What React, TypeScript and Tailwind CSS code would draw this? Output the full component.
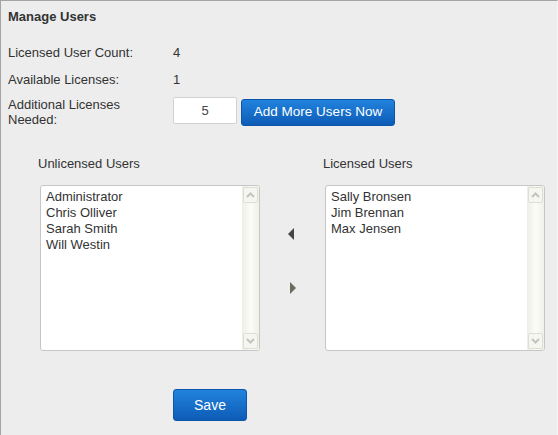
import React from 'react';

const unlicensed = ['Administrator', 'Chris Olliver', 'Sarah Smith', 'Will Westin'];
const licensed = ['Sally Bronsen', 'Jim Brennan', 'Max Jensen'];

const Chevron = ({ up }: { up: boolean }) => (
    <svg width="9" height="6" viewBox="0 0 9 6">
        <polyline
            points={up ? '1,5 4.5,1.5 8,5' : '1,1 4.5,4.5 8,1'}
            fill="none"
            stroke="#c4c4bc"
            strokeWidth="2"
        />
    </svg>
);

const ListBox = ({ items }: { items: string[] }) => (
    <div className="relative ml-[2px] flex h-[166px] w-[220px] overflow-hidden rounded-[3px] border border-[#c6c6c6] bg-white">
        <div className="flex-1 pl-[5px] pt-[3px]">
            {items.map((name) => (
                <div key={name} className="text-[13px] leading-4 text-[#333]">
                    {name}
                </div>
            ))}
        </div>
        {/* scrollbar */}
        <div className="flex w-[17px] flex-col justify-between bg-gradient-to-r from-[#eeeee6] via-[#fbfbf8] to-[#f1f1ea] px-[1px] py-[1px]">
            <div className="flex h-[16px] items-center justify-center rounded-[2px] border border-[#deded6] bg-[#f6f6f1]">
                <Chevron up />
            </div>
            <div className="flex h-[16px] items-center justify-center rounded-[2px] border border-[#deded6] bg-[#f6f6f1]">
                <Chevron up={false} />
            </div>
        </div>
    </div>
);

export default function App() {
    return (
        <div className="h-[435px] w-[558px] border-l border-t border-r border-[#a4a4a4] border-r-[#f4f4f4] bg-[#ededed] font-['Liberation_Sans',Arial,sans-serif] text-[13px] text-[#333]">
            <div className="pl-[7px] pt-[8px] font-bold leading-4">Manage Users</div>

            <div className="mt-[20px] flex pl-[7px] leading-4">
                <div className="w-[165px]">Licensed User Count:</div>
                <div>4</div>
            </div>
            <div className="mt-[11px] flex pl-[7px] leading-4">
                <div className="w-[165px]">Available Licenses:</div>
                <div>1</div>
            </div>
            <div className="mt-[9px] flex items-start pl-[7px]">
                <div className="w-[165px] leading-[15px]">
                    Additional Licenses
                    <br />
                    Needed:
                </div>
                <input
                    type="text"
                    defaultValue="5"
                    className="h-[27px] w-[64px] rounded-[2px] border border-[#d2d2d2] bg-white text-center text-[13px] text-[#444] outline-none"
                />
                <button className="ml-[4px] mt-[2px] h-[27px] w-[154px] rounded-[3px] border border-[#0b56aa] bg-gradient-to-b from-[#2183de] to-[#0d5cb6] text-[13.5px] text-white">
                    Add More Users Now
                </button>
            </div>

            <div className="mt-[29px] flex pl-[37px]">
                <div className="w-[224px]">
                    <div className="leading-4">Unlicensed Users</div>
                    <div className="mt-[13px]">
                        <ListBox items={unlicensed} />
                    </div>
                </div>
                <div className="flex w-[61px] flex-col pt-[72px]">
                    <svg className="ml-[26px]" width="6" height="12" viewBox="0 0 6 12">
                        <polygon points="6,0 0,6 6,12" fill="#454545" />
                    </svg>
                    <svg className="ml-[28px] mt-[42px]" width="6" height="12" viewBox="0 0 6 12">
                        <polygon points="0,0 6,6 0,12" fill="#6b6b5e" />
                    </svg>
                </div>
                <div className="w-[224px]">
                    <div className="leading-4">Licensed Users</div>
                    <div className="mt-[13px]">
                        <ListBox items={licensed} />
                    </div>
                </div>
            </div>

            <button className="ml-[172px] mt-[38px] h-[32px] w-[74px] rounded-[3px] border border-[#0b56aa] bg-gradient-to-b from-[#2183de] to-[#0d5cb6] text-[14px] text-white">
                Save
            </button>
        </div>
    );
}
